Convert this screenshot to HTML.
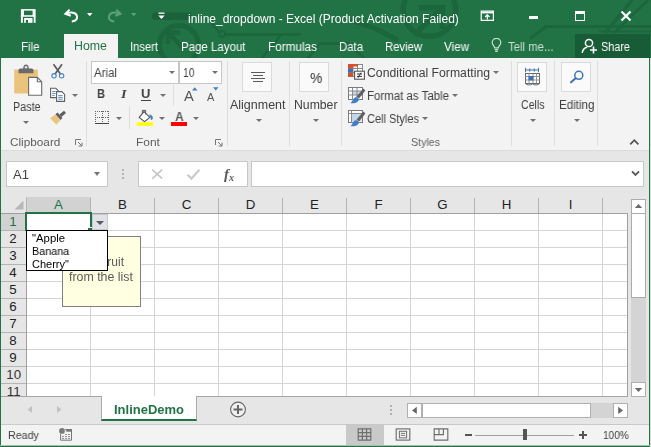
<!DOCTYPE html>
<html lang="en"><head><meta charset="utf-8"><title>inline_dropdown - Excel</title>
<style>
html,body{margin:0;padding:0}
body{width:651px;height:447px;position:relative;overflow:hidden;background:#e6e6e6;font-family:'Liberation Sans',sans-serif}
div,span,svg{position:absolute;box-sizing:border-box}
.t{will-change:transform;white-space:pre;line-height:16px;height:16px;transform-origin:0 50%;display:block}
.sep{width:1px;background:#dedede;top:61px;height:85px}
.box{background:#fff;border:1px solid #c8c8c8}
.ibox{background:#fafafa;border:1px solid #dadada}
.ch{top:197px;height:15px;margin-left:0.5px;font-size:13.3px;line-height:16px;text-align:center;color:#333;width:64px}
.rh{left:1px;width:24px;height:17px;font-size:13.3px;line-height:16px;text-align:center;color:#333}
.arr{width:0;height:0;border-left:3px solid transparent;border-right:3px solid transparent;border-top:3px solid #707070}

</style></head>
<body>
<!-- title bar + tabs -->
<div style="left:0;top:0;width:651px;height:58px;background:#217346"></div>
<div style="left:64px;top:34px;width:54px;height:24px;background:#f3f3f3"></div>
<div style="left:575px;top:34px;width:74.5px;height:23.5px;background:#185c37"></div>
<!-- ribbon -->
<div style="left:1px;top:58px;width:649px;height:93px;background:#f3f3f3;border-bottom:1px solid #dcdcdc"></div>
<div class="sep" style="left:86px"></div>
<div class="sep" style="left:227px"></div>
<div class="sep" style="left:289px"></div>
<div class="sep" style="left:341px"></div>
<div class="sep" style="left:511px"></div>
<div class="sep" style="left:554px"></div>
<div class="sep" style="left:597px"></div>
<div class="sep" style="left:129px;top:106px;height:23px"></div>
<div class="sep" style="left:173px;top:85px;height:21px"></div>
<!-- font boxes -->
<div class="box" style="left:91px;top:61px;width:87.5px;height:23px;border-color:#c6c6c6"></div>
<div class="box" style="left:179.2px;top:61px;width:43px;height:23px;border-color:#c6c6c6"></div>
<div class="arr" style="left:168.5px;top:71px"></div>
<div class="arr" style="left:211.5px;top:71px"></div>
<!-- large icon boxes -->
<div class="ibox" style="left:242px;top:62px;width:30px;height:30px"></div>
<div class="ibox" style="left:299px;top:62px;width:30px;height:30px"></div>
<div class="ibox" style="left:517px;top:62px;width:30px;height:30px"></div>
<div class="ibox" style="left:561px;top:62px;width:30px;height:30px"></div>
<!-- formula bar -->
<div class="box" style="left:6px;top:161px;width:102px;height:26px"></div>
<div class="box" style="left:138px;top:161px;width:110px;height:26px"></div>
<div class="box" style="left:251px;top:161px;width:393px;height:26px"></div>
<div class="arr" style="left:93.5px;top:171.5px;border-left-width:3.8px;border-right-width:3.8px;border-top-width:4px;border-top-color:#777"></div>
<!-- sheet -->
<div style="left:1px;top:197px;width:626px;height:16px;background:#e6e6e6"></div>
<div style="left:26px;top:213px;width:602px;height:184px;background:#fff;border-right:1px solid #a0a0a0;border-bottom:1px solid #a0a0a0;
background-image:linear-gradient(to right,#d4d4d4 1px,transparent 1px),linear-gradient(to bottom,#d4d4d4 1px,transparent 1px);background-size:64px 17px,64px 17px;background-position:0 0,0 0"></div>
<div style="left:1px;top:213px;width:25px;height:183px;background:#e6e6e6"></div>
<!-- column headers -->
<div style="left:1px;top:213px;width:627px;height:1px;background:#9f9f9f"></div>
<div style="left:26px;top:197px;width:65px;height:16px;background:#d2d2d2"></div>
<div class="ch" style="left:26px;color:#217346">A</div>
<div class="ch" style="left:90px;color:#222">B</div>
<div class="ch" style="left:154px;color:#222">C</div>
<div class="ch" style="left:218px;color:#222">D</div>
<div class="ch" style="left:282px;color:#222">E</div>
<div class="ch" style="left:346px;color:#222">F</div>
<div class="ch" style="left:410px;color:#222">G</div>
<div class="ch" style="left:474px;color:#222">H</div>
<div class="ch" style="left:538px;color:#222">I</div>
<div style="left:26px;top:198px;width:1px;height:15px;background:#b4b4b4"></div>
<div style="left:90px;top:198px;width:1px;height:15px;background:#b4b4b4"></div>
<div style="left:154px;top:198px;width:1px;height:15px;background:#b4b4b4"></div>
<div style="left:218px;top:198px;width:1px;height:15px;background:#b4b4b4"></div>
<div style="left:282px;top:198px;width:1px;height:15px;background:#b4b4b4"></div>
<div style="left:346px;top:198px;width:1px;height:15px;background:#b4b4b4"></div>
<div style="left:410px;top:198px;width:1px;height:15px;background:#b4b4b4"></div>
<div style="left:474px;top:198px;width:1px;height:15px;background:#b4b4b4"></div>
<div style="left:538px;top:198px;width:1px;height:15px;background:#b4b4b4"></div>
<div style="left:602px;top:198px;width:1px;height:15px;background:#b4b4b4"></div>
<!-- row headers -->
<div style="left:1px;top:214px;width:25px;height:16px;background:#d2d2d2"></div>
<div class="rh" style="top:214px;color:#217346">1</div>
<div style="left:1px;top:230px;width:25px;height:1px;background:#b4b4b4"></div>
<div class="rh" style="top:231px;color:#222">2</div>
<div style="left:1px;top:247px;width:25px;height:1px;background:#b4b4b4"></div>
<div class="rh" style="top:248px;color:#222">3</div>
<div style="left:1px;top:264px;width:25px;height:1px;background:#b4b4b4"></div>
<div class="rh" style="top:265px;color:#222">4</div>
<div style="left:1px;top:281px;width:25px;height:1px;background:#b4b4b4"></div>
<div class="rh" style="top:282px;color:#222">5</div>
<div style="left:1px;top:298px;width:25px;height:1px;background:#b4b4b4"></div>
<div class="rh" style="top:299px;color:#222">6</div>
<div style="left:1px;top:315px;width:25px;height:1px;background:#b4b4b4"></div>
<div class="rh" style="top:316px;color:#222">7</div>
<div style="left:1px;top:332px;width:25px;height:1px;background:#b4b4b4"></div>
<div class="rh" style="top:333px;color:#222">8</div>
<div style="left:1px;top:349px;width:25px;height:1px;background:#b4b4b4"></div>
<div class="rh" style="top:350px;color:#222">9</div>
<div style="left:1px;top:366px;width:25px;height:1px;background:#b4b4b4"></div>
<div class="rh" style="top:367px;color:#222letter-spacing:-0.8px;padding-left:1.5px">10</div>
<div style="left:1px;top:383px;width:25px;height:1px;background:#b4b4b4"></div>
<div class="rh" style="top:384px;color:#222letter-spacing:-0.8px;padding-left:1.5px">11</div>
<div style="left:26px;top:213px;width:1px;height:184px;background:#9f9f9f"></div>
<!-- select-all triangle -->
<svg style="left:14px;top:200px" width="10" height="10" viewBox="0 0 10 10"><path d="M9.5 0.5V9.5H0.5Z" fill="#b7b7b7"/></svg>
<!-- mask below sheet / clip row 11 -->
<div style="left:1px;top:396px;width:649px;height:28px;background:#e6e6e6"></div><div style="left:1px;top:396px;width:627px;height:1px;background:#a6a6a6"></div>
<!-- tooltip -->
<div style="left:62px;top:236px;width:79px;height:71px;background:#ffffe1;border:1px solid #808080"></div>
<span class="t" style="left:68.4px;top:254px;font-size:12px;color:#5a5a5a;transform:scaleX(1.0)">Pick a fruit</span>
<span class="t" style="left:69px;top:269px;font-size:12px;color:#5a5a5a;transform:scaleX(1.03)">from the list</span>
<!-- selection -->
<div style="left:25px;top:212px;width:67px;height:19px;border:2px solid #217346"></div>
<div style="left:27px;top:229px;width:61px;height:2px;background:#fff"></div>
<div style="left:87px;top:227px;width:5px;height:4px;background:#217346;border-left:1px solid #fff;border-top:1px solid #fff"></div>
<!-- dropdown button -->
<div style="left:92px;top:214px;width:16px;height:16px;background:#e1e1e8;border:1px solid #c8c8d0"></div>
<div class="arr" style="left:95.5px;top:221px;border-left-width:4px;border-right-width:4px;border-top-width:4px;border-top-color:#5a5a5a"></div>
<!-- dropdown list -->
<div style="left:26px;top:230px;width:82px;height:41px;background:#fff;border:1px solid #000"></div>
<span class="t" style="left:31.5px;top:230px;font-size:11px;color:#000;transform:scaleX(1.03)">"Apple</span>
<span class="t" style="left:31.5px;top:243px;font-size:11px;color:#000;transform:scaleX(0.98)">Banana</span>
<span class="t" style="left:31.5px;top:256px;font-size:11px;color:#000;transform:scaleX(0.995)">Cherry"</span>
<!-- vertical scrollbar -->
<div style="left:631px;top:199px;width:15px;height:198px;background:#d4d4d4"></div>
<div class="box" style="left:631px;top:199px;width:15px;height:15px;border-color:#ababab"></div>
<div class="box" style="left:631px;top:382px;width:15px;height:15px;border-color:#b0b0b0"></div>
<div class="box" style="left:631px;top:213px;width:15px;height:85px;border-color:#ababab"></div>
<!-- sheet tabs -->
<div style="left:101px;top:396px;width:96px;height:25px;background:#fff;border-bottom:2px solid #217346;border-right:1px solid #ababab;border-left:1px solid #ababab"></div>
<!-- horizontal scrollbar -->
<div style="left:407px;top:403px;width:220px;height:15px;background:#d4d4d4"></div>
<div class="box" style="left:407px;top:403px;width:15px;height:15px;border-color:#b0b0b0"></div>
<div class="box" style="left:422px;top:403px;width:169px;height:15px;border-color:#b0b0b0"></div>
<div class="box" style="left:613px;top:403px;width:15px;height:15px;border-color:#b0b0b0"></div>
<!-- status bar -->
<div style="left:1px;top:424px;width:649px;height:22px;background:#f3f3f3;border-top:1px solid #c8c8c8"></div>
<div style="left:346px;top:425px;width:38px;height:21px;background:#c9c9c9"></div>
<!-- window border -->
<div style="left:0;top:58px;width:1px;height:389px;background:#217346"></div>
<div style="left:649px;top:58px;width:1px;height:389px;background:#217346"></div><div style="left:650px;top:58px;width:1px;height:389px;background:#d9dfdb"></div>
<div style="left:0;top:445px;width:650px;height:1px;background:#9fc1ae"></div><div style="left:0;top:446px;width:650px;height:1px;background:#217346"></div>
<!-- title bar background pattern (subtle) -->
<svg style="left:0;top:0" width="651" height="58" viewBox="0 0 651 58" fill="none" stroke="#1c663d" stroke-linecap="round">
<path d="M155.5 16.2H188" stroke-width="7.5" stroke="#1b613a"/>
<circle cx="179" cy="45" r="19.5" stroke-width="5"/>
<path d="M168 44V32.5H180M169 33.500000000000004L183 48" stroke-width="4.5" stroke-linecap="butt"/>
<circle cx="222" cy="34" r="3" stroke-width="1.8"/>
<path d="M225.5 34.5H300" stroke-width="2.6"/>
<path d="M219.5 32L212 24" stroke-width="2"/>
<path d="M280 36L262 58" stroke-width="2.4"/>
<path d="M308 58L320 43.5H348L364 58" stroke-width="2.4"/>
<path d="M350 20L374 28L396 39" stroke-width="5"/>
<circle cx="429.5" cy="10" r="26.3" stroke-width="5.4"/>
<path d="M419 7.5H442.5V29M414 35L441 9" stroke-width="5.5" stroke-linecap="butt"/>
<path d="M531 38L546 26.5H651" stroke-width="3"/>
<path d="M600 31.5H651" stroke-width="2"/>
<path d="M606 32L632 0M615 32L648 0" stroke-width="3"/>
</svg>
<!-- QAT icons -->
<svg style="left:20px;top:8px" width="17" height="16" viewBox="0 0 17 16"><rect x="0.9" y="1.1" width="14.7" height="13.7" fill="#fff"/><rect x="4" y="2.6" width="8.6" height="4.6" fill="#217346"/><path d="M2.9 8.700000000000001H13.700000000000001V14.9H12.5V9.9H4.1V14.9H2.9Z" fill="#217346"/><rect x="5.8" y="12" width="2.2" height="2.9" fill="#217346"/></svg>
<svg style="left:63px;top:8px" width="17" height="16" viewBox="0 0 17 16" fill="none" stroke="#fff" stroke-width="2"><path d="M6.6 1.6L2.4 5.8L7.8 7.8"/><path d="M3 5.7C7.4 3.8 13.4 4.2 14.1 8.700000000000001C14.5 11.700000000000001 11.8 13.3 8.8 13.4"/></svg>
<svg style="left:87px;top:13px" width="6" height="4" viewBox="0 0 6 4"><path d="M0 0H5.5L2.75 3.2Z" fill="#fff"/></svg>
<svg style="left:106px;top:8px" width="17" height="16" viewBox="0 0 17 16" fill="none" stroke="#5ca07c" stroke-width="2"><path d="M10.4 1.6L14.6 5.8L9.2 7.8"/><path d="M14 5.7C9.6 3.8 3.6 4.2 2.9 8.700000000000001C2.5 11.700000000000001 5.2 13.3 8.2 13.4"/></svg>
<svg style="left:131px;top:13px" width="6" height="4" viewBox="0 0 6 4"><path d="M0 0H5.5L2.75 3.2Z" fill="#5da27e"/></svg>
<svg style="left:158px;top:12px" width="7" height="8" viewBox="0 0 7 8"><path d="M0.5 0.5H6.5V1.8H0.5Z" fill="#fff"/><path d="M0.3 3.4H6.7L3.5 7Z" fill="#fff"/></svg>
<!-- window controls -->
<svg style="left:480px;top:10px" width="16" height="12" viewBox="0 0 16 12" fill="none" stroke="#fff"><path d="M1.2 1.2H13.4V10.4H1.2Z" stroke-width="1.2"/><path d="M1.2 2.6H13.4" stroke-width="1.6"/><path d="M7.3 9.4V5.2M5.1 7L7.3 4.8L9.5 7" stroke-width="1.2"/></svg>
<div style="left:529px;top:16px;width:9px;height:3px;background:#fff"></div>
<div style="left:575px;top:11px;width:10px;height:10px;border:1px solid #fff;border-top-width:3px"></div>
<svg style="left:620px;top:10px" width="12" height="12" viewBox="0 0 12 12"><path d="M1.5 1.5L10.5 10.5M10.5 1.5L1.5 10.5" stroke="#fff" stroke-width="2.2"/></svg>
<!-- tell me bulb -->
<svg style="left:491px;top:38px" width="11" height="15" viewBox="0 0 11 15" fill="none" stroke="#c6e0d1" stroke-width="1.2"><path d="M3.6 9.8C3.5 8 1.2 7.2 1.2 4.6A4.2 4.2 0 0 1 9.8 4.6C9.8 7.2 7.5 8 7.4 9.8Z"/><path d="M3.8 11.6H7.2M4.2 13.3H6.8"/></svg>
<!-- share icon -->
<svg style="left:581px;top:38px" width="17" height="16" viewBox="0 0 17 16" fill="none" stroke="#fff" stroke-width="1.5"><circle cx="8" cy="5" r="3.6"/><path d="M1.2 15C1.6 11.5 4 9.6 6.2 9.2"/><path d="M12.5 8.5V15.5M9 12H16" stroke-width="1.6"/></svg>
<!-- clipboard group icons -->
<svg style="left:13px;top:63px" width="31" height="34" viewBox="0 0 31 34">
<path d="M1.2 6.5H24.8V30.5H1.2Z" fill="#eac47c"/>
<path d="M5.5 10.2V7.5C5.5 6.4 6.3 5.6 7.4 5.6H10.2C10.2 3 11.5 1.6 13 1.6S15.800000000000001 3 15.800000000000001 5.6H18.6C19.7 5.6 20.5 6.4 20.5 7.500000000000001V10.2Z" fill="#6a6a6a"/>
<rect x="11.8" y="3.3" width="2.4" height="2" fill="#f3f3f3"/>
<path d="M15.6 14.4H24.3L28.7 18.8V32.2H15.6Z" fill="#fff" stroke="#6a6a6a" stroke-width="1.1"/>
<path d="M24.3 14.4V18.8H28.7" fill="none" stroke="#6a6a6a" stroke-width="1.1"/>
</svg>
<svg style="left:50px;top:63px" width="17" height="17" viewBox="0 0 17 17" fill="none">
<path d="M3.5 1.3L10.6 11.2M12 1.3L4.9 11.2" stroke="#5c5c5c" stroke-width="1.7"/>
<circle cx="4" cy="12.8" r="2.2" stroke="#4a86c8" stroke-width="1.1"/>
<circle cx="11.6" cy="12.8" r="2.2" stroke="#4a86c8" stroke-width="1.1"/>
</svg>
<svg style="left:49px;top:87px" width="18" height="16" viewBox="0 0 18 16" fill="#fff" stroke="#606060" stroke-width="1.1">
<path d="M1.6 1.3H6.8L9.2 3.7V10.6H1.6Z"/>
<path d="M3.2 4.6H6.6M3.2 6.6H6.6M3.2 8.6H5.6" stroke="#3f7fc4" stroke-width="0.9"/>
<path d="M7.6 4.6H12.8L15.6 7.4V14.4H7.6Z"/>
<path d="M9.3 8.6H13.6M9.3 10.4H13.6M9.3 12.2H13.6" stroke="#3f7fc4" stroke-width="0.9"/>
</svg>
<div class="arr" style="left:71.5px;top:94px;border-left-width:3px;border-right-width:3px"></div>
<svg style="left:49px;top:110px" width="18" height="16" viewBox="0 0 18 16">
<path d="M1 8.2L6.2 4.4L11.4 10.2L7.4 14.6Z" fill="#eac47c"/>
<path d="M6.4 4.2L8.6 2.6L13.4 8L11.6 10Z" fill="#5f5f5f"/>
<path d="M10.4 4.6L15 0.8L17 3L12.4 7Z" fill="#5f5f5f"/>
</svg>
<div class="arr" style="left:22.5px;top:121px;border-left-width:3px;border-right-width:3px"></div>
<!-- font group icons -->
<span class="t" style="left:97px;top:86px;font-size:13px;font-weight:bold;color:#444;transform:scaleX(0.85)">B</span>
<span class="t" style="left:121px;top:86px;font-size:13px;font-weight:bold;font-style:italic;color:#444;font-family:'Liberation Serif',serif;transform:scaleX(1.1)">I</span>
<span class="t" style="left:141px;top:86px;font-size:13px;font-weight:bold;color:#444;transform:scaleX(0.95)">U</span>
<div style="left:141px;top:100px;width:10px;height:1px;background:#444"></div>
<div class="arr" style="left:159.5px;top:94px;border-left-width:3px;border-right-width:3px"></div>
<span class="t" style="left:184px;top:88px;font-size:14px;color:#555;transform:scaleX(1.05)">A</span>
<svg style="left:192px;top:87px" width="6" height="4" viewBox="0 0 6 4"><path d="M0 3.5H5.5L2.75 0.3Z" fill="#3f7fc4"/></svg>
<span class="t" style="left:207px;top:89px;font-size:11px;color:#555;transform:scaleX(1.0)">A</span>
<svg style="left:213px;top:87px" width="6" height="4" viewBox="0 0 6 4"><path d="M0 0.3H5.5L2.75 3.5Z" fill="#3f7fc4"/></svg>
<svg style="left:94px;top:110px" width="16" height="15" viewBox="0 0 16 15" fill="none" stroke="#666" stroke-width="1" shape-rendering="crispEdges">
<path d="M1 1.5H15M1 7.5H15M1.5 1V13M8.5 1V13M14.5 1V13" stroke-dasharray="1 1"/>
<path d="M1 13.5H15" stroke="#444" stroke-width="1"/></svg>
<div class="arr" style="left:115.5px;top:117px;border-left-width:3px;border-right-width:3px"></div>
<svg style="left:136px;top:109px" width="19" height="18" viewBox="0 0 19 18">
<path d="M0.8 13.3H17.1V16.8H0.8Z" fill="#ffff00"/>
<path d="M8 2.6L13.8 8.4L8.5 12.6L3.2 8.4Z" fill="#fff" stroke="#555" stroke-width="1.1"/>
<path d="M6.4 4.6V1.4H9.6V5.4" fill="none" stroke="#555" stroke-width="1"/>
<path d="M13.2 5.4C15.6 5.4 17 7.2 16.8 9.2C16.6 10.6 15.6 11.2 14.6 10.8C15.2 9.4 14.8 8.6 14 8Z" fill="#3f7fc4"/>
</svg>
<div class="arr" style="left:158.5px;top:117px;border-left-width:3px;border-right-width:3px"></div>
<span class="t" style="left:174.8px;top:109.2px;font-size:13.5px;font-weight:bold;color:#5a5a5a;transform:scaleX(0.9)">A</span>
<div style="left:171px;top:122px;width:16px;height:4px;background:#ff0000"></div>
<div class="arr" style="left:192.5px;top:117px;border-left-width:3px;border-right-width:3px"></div>
<!-- dialog launchers -->
<svg style="left:75px;top:139px" width="8" height="8" viewBox="0 0 8 8" fill="none" stroke="#777" stroke-width="1"><path d="M0.5 6V0.5H6"/><path d="M3 3L7 7M7 3.6V7H3.6"/></svg>
<svg style="left:215px;top:139px" width="8" height="8" viewBox="0 0 8 8" fill="none" stroke="#777" stroke-width="1"><path d="M0.5 6V0.5H6"/><path d="M3 3L7 7M7 3.6V7H3.6"/></svg>
<!-- alignment / number -->
<div style="left:251px;top:72px;width:14px;height:1px;background:#5a5a5a"></div>
<div style="left:253px;top:75px;width:10px;height:1px;background:#5a5a5a"></div>
<div style="left:251px;top:78px;width:14px;height:1px;background:#5a5a5a"></div>
<div style="left:253px;top:81px;width:10px;height:1px;background:#5a5a5a"></div>
<div class="arr" style="left:255.5px;top:119px;border-left-width:3px;border-right-width:3px"></div>
<span class="t" style="left:309.5px;top:69.5px;font-size:15px;color:#333;transform:scaleX(0.93)">%</span>
<div class="arr" style="left:312.5px;top:119px;border-left-width:3px;border-right-width:3px"></div>
<!-- styles icons -->
<svg style="left:347px;top:63px" width="19" height="18" viewBox="0 0 19 18">
<rect x="1.5" y="1.5" width="14" height="12" fill="#fff" stroke="#8a8a8a" stroke-width="1"/>
<path d="M6 1.5V13.5M10.5 1.5V13.5M1.5 5.5H15.5M1.5 9.5H15.5" stroke="#8a8a8a" stroke-width="1" fill="none"/>
<rect x="1" y="1" width="5" height="4.5" fill="#d4502f"/><rect x="6" y="1" width="5" height="2.5" fill="#d4502f"/>
<rect x="1" y="5.700000000000001" width="5" height="3.8" fill="#3f6fb5"/>
<rect x="1" y="9.8" width="5" height="4" fill="#d4502f"/>
<rect x="7.6" y="8.2" width="9.8" height="8" fill="#fff" stroke="#555" stroke-width="1.1"/>
<path d="M10 11H15M10 13.4H15M14 9.6L11 14.8" stroke="#333" stroke-width="1" fill="none"/>
</svg>
<svg style="left:347px;top:86px" width="19" height="18" viewBox="0 0 19 18">
<rect x="1.5" y="1.5" width="14" height="12" fill="#fff" stroke="#7a7a7a" stroke-width="1"/>
<rect x="5.5" y="5" width="9" height="4" fill="#c5d5ea"/>
<path d="M5.5 1.5V13.5M10 1.5V13.5M1.5 5H15.5M1.5 9H15.5" stroke="#8a8a8a" stroke-width="1" fill="none"/>
<path d="M9.6 10.6L16.4 2.6L18.4 4.4L12 12.6Z" fill="#5f5f5f"/>
<path d="M3.4 17.2C5.4 16.2 5.6 13 7.8 11.6C9.8 10.4 12.4 12.2 11.6 14.4C10.6 17 6 17.6 3.4 17.2Z" fill="#3f7fc4"/>
</svg>
<svg style="left:347px;top:109px" width="19" height="18" viewBox="0 0 19 18">
<rect x="1.5" y="1.5" width="14" height="12" fill="#fff" stroke="#7a7a7a" stroke-width="1"/>
<rect x="4.5" y="4.5" width="10" height="8" fill="#c5d5ea"/>
<path d="M4.5 1.5V13.5M1.5 4.5H15.5" stroke="#8a8a8a" stroke-width="1" fill="none"/>
<path d="M9.6 10.6L16.4 2.6L18.4 4.4L12 12.6Z" fill="#5f5f5f"/>
<path d="M3.4 17.2C5.4 16.2 5.6 13 7.8 11.6C9.8 10.4 12.4 12.2 11.6 14.4C10.6 17 6 17.6 3.4 17.2Z" fill="#3f7fc4"/>
</svg>
<div class="arr" style="left:492.5px;top:71px;border-left-width:3px;border-right-width:3px"></div>
<div class="arr" style="left:451.5px;top:94px;border-left-width:3px;border-right-width:3px"></div>
<div class="arr" style="left:422px;top:117px;border-left-width:3px;border-right-width:3px"></div>
<!-- cells / editing icons -->
<svg style="left:524px;top:67px" width="17" height="19" viewBox="0 0 17 19" fill="none">
<path d="M1.5 3H14.5M1.5 0.8V5.2M14.5 0.8V5.2M5.8 1.4V4.6M10.2 1.4V4.6" stroke="#3f6fb5" stroke-width="1"/>
<rect x="1.5" y="6.5" width="14" height="10" fill="#fff" stroke="#6a6a6a" stroke-width="1"/>
<path d="M1.5 9.5H15.5M1.5 13H15.5M5 6.5V16.5M9 6.5V16.5M12.5 6.5V16.5" stroke="#8a8a8a" stroke-width="0.9"/>
<rect x="4.5" y="9" width="5" height="4.4" fill="#3f6fb5"/>
<path d="M1.2 16.4C3 18.4 6.6 18.4 8.4 16.8C10.2 18.4 13.8 18.4 15.6 16.4" stroke="#6a6a6a" stroke-width="1"/>
</svg>
<svg style="left:568px;top:68px" width="18" height="17" viewBox="0 0 18 17" fill="none" stroke="#3f74b8"><circle cx="10.8" cy="7.3" r="4" stroke-width="1.5"/><path d="M7.6 10.2L3 14.2" stroke-width="2.1" stroke-linecap="round"/></svg>
<div class="arr" style="left:529.5px;top:119px;border-left-width:3px;border-right-width:3px"></div>
<div class="arr" style="left:573.5px;top:119px;border-left-width:3px;border-right-width:3px"></div>
<!-- collapse ribbon chevron -->
<svg style="left:629px;top:138px" width="11" height="8" viewBox="0 0 11 8" fill="none" stroke="#555" stroke-width="1.8"><path d="M1.2 6.4L5.3 2.2L9.4 6.4"/></svg>
<!-- formula bar icons -->
<div style="left:122px;top:169px;width:2px;height:2px;background:#b5b5b5"></div>
<div style="left:122px;top:173px;width:2px;height:2px;background:#b5b5b5"></div>
<div style="left:122px;top:177px;width:2px;height:2px;background:#b5b5b5"></div>
<svg style="left:151px;top:168px" width="13" height="12" viewBox="0 0 13 12"><path d="M1.2 1.6L11.2 10.6M11.2 1.6L1.2 10.6" stroke="#c3c3c3" stroke-width="1.5" fill="none"/></svg>
<svg style="left:186px;top:168px" width="15" height="13" viewBox="0 0 15 13"><path d="M1.6 6.8L5.4 10.6L13.4 1.8" stroke="#cacaca" stroke-width="2.2" fill="none"/></svg>
<span class="t" style="left:224px;top:166px;font-size:15px;font-style:italic;font-weight:bold;color:#5a5a5a;font-family:'Liberation Serif',serif">f</span>
<span class="t" style="left:229px;top:169.5px;font-size:10px;font-style:italic;font-weight:bold;color:#5a5a5a;font-family:'Liberation Serif',serif">x</span>
<svg style="left:631px;top:170px" width="9" height="7" viewBox="0 0 9 7" fill="none" stroke="#555" stroke-width="1.8"><path d="M1 1.4L4.5 5L8 1.4"/></svg>
<!-- sheet nav -->
<svg style="left:27px;top:405px" width="6" height="9" viewBox="0 0 6 9"><path d="M5 0.8V8L0.6 4.4Z" fill="#c2c2c2"/></svg>
<svg style="left:56px;top:405px" width="6" height="9" viewBox="0 0 6 9"><path d="M1 0.8V8L5.4 4.4Z" fill="#c2c2c2"/></svg>
<svg style="left:229px;top:400px" width="18" height="18" viewBox="0 0 18 18" fill="none" stroke="#666"><circle cx="9" cy="9.5" r="7.4" stroke-width="1.1" fill="#f0f0f0"/><path d="M9 5V14M4.5 9.5H13.5" stroke-width="2"/></svg>
<div style="left:390px;top:405px;width:2px;height:2px;background:#b0b0b0"></div>
<div style="left:390px;top:409px;width:2px;height:2px;background:#b0b0b0"></div>
<div style="left:390px;top:413px;width:2px;height:2px;background:#b0b0b0"></div>
<!-- scrollbar arrows -->
<svg style="left:411px;top:406px" width="7" height="9" viewBox="0 0 7 9"><path d="M5.8 0.8V8L1 4.4Z" fill="#666"/></svg>
<svg style="left:617px;top:406px" width="7" height="9" viewBox="0 0 7 9"><path d="M1.2 0.8V8L6 4.4Z" fill="#666"/></svg>
<svg style="left:634px;top:203px" width="9" height="6" viewBox="0 0 9 6"><path d="M0.8 5H8.2L4.5 1Z" fill="#6a6a6a"/></svg>
<svg style="left:634px;top:387px" width="9" height="6" viewBox="0 0 9 6"><path d="M0.8 1H8.2L4.5 5Z" fill="#6a6a6a"/></svg>
<!-- status bar icons -->
<svg style="left:58px;top:427px" width="15" height="15" viewBox="0 0 15 15">
<path d="M2.6 7V13.2H13.5V2.6H7" fill="none" stroke="#767676" stroke-width="1"/>
<rect x="8.2" y="2.1" width="5.8" height="2.6" fill="#767676"/>
<circle cx="4" cy="3.9" r="2.9" fill="#7a7a7a"/>
<path d="M7.1 7.5H8.9M10.1 7.5H11.9M4.1 9.6H5.9M7.1 9.6H8.9M10.1 9.6H11.9M4.1 11.6H5.9M7.1 11.6H8.9M10.1 11.6H11.9" stroke="#767676" stroke-width="0.9"/>
</svg>
<svg style="left:357px;top:428px" width="15" height="13" viewBox="0 0 15 13" fill="none" stroke="#6e6e6e" stroke-width="1.15"><path d="M1.2 0.9H13.8V12.1H1.2ZM5.4 0.9V12.1M9.6 0.9V12.1M1.2 4.6H13.8M1.2 8.4H13.8"/></svg>
<svg style="left:395px;top:428px" width="16" height="13" viewBox="0 0 16 13" fill="none" stroke="#6e6e6e"><rect x="1.2" y="0.9" width="13.6" height="11.2" stroke-width="1.15"/><rect x="4.4" y="3.3" width="7.2" height="6.6" stroke-width="1"/><path d="M5.8 5.4H10.2M5.8 7.4H10.2" stroke-width="0.9"/></svg>
<svg style="left:433px;top:428px" width="16" height="13" viewBox="0 0 16 13" fill="none" stroke="#6e6e6e" stroke-width="1.15"><path d="M1.2 0.9H14.8V12.1H1.2ZM1.2 6.6H10.4V0.9M6 0.9V6.6"/></svg>
<!-- zoom slider -->
<div style="left:465px;top:434px;width:7px;height:2px;background:#555"></div>
<div style="left:475px;top:434.5px;width:99px;height:1px;background:#a0a0a0"></div>
<div style="left:523px;top:429px;width:4px;height:11px;background:#555"></div>
<div style="left:579px;top:434px;width:8px;height:2px;background:#555"></div>
<div style="left:582px;top:431px;width:2px;height:8px;background:#555"></div>

<!-- text -->
<span class="t" style="left:188px;top:11.3px;font-size:12px;color:#fff;font-weight:normal;transform:scaleX(0.999);">inline_dropdown - Excel (Product Activation Failed)</span>
<span class="t" style="left:21px;top:38.6px;font-size:12px;color:#fff;font-weight:normal;transform:scaleX(0.956);">File</span>
<span class="t" style="left:74px;top:37.6px;font-size:12px;color:#217346;font-weight:normal;transform:scaleX(1.031);">Home</span>
<span class="t" style="left:130px;top:38.6px;font-size:12px;color:#fff;font-weight:normal;transform:scaleX(0.933);">Insert</span>
<span class="t" style="left:181px;top:38.6px;font-size:12px;color:#fff;font-weight:normal;transform:scaleX(0.957);">Page Layout</span>
<span class="t" style="left:268px;top:38.6px;font-size:12px;color:#fff;font-weight:normal;transform:scaleX(0.980);">Formulas</span>
<span class="t" style="left:339px;top:38.6px;font-size:12px;color:#fff;font-weight:normal;transform:scaleX(0.946);">Data</span>
<span class="t" style="left:385px;top:38.6px;font-size:12px;color:#fff;font-weight:normal;transform:scaleX(0.940);">Review</span>
<span class="t" style="left:444px;top:38.6px;font-size:12px;color:#fff;font-weight:normal;transform:scaleX(0.969);">View</span>
<span class="t" style="left:508px;top:38.6px;font-size:12px;color:#c6e0d1;font-weight:normal;transform:scaleX(0.948);">Tell me...</span>
<span class="t" style="left:601px;top:38.6px;font-size:12px;color:#fff;font-weight:normal;transform:scaleX(0.905);">Share</span>
<span class="t" style="left:12.5px;top:99.0px;font-size:12px;color:#404040;font-weight:normal;transform:scaleX(0.896);">Paste</span>
<span class="t" style="left:10.3px;top:134.1px;font-size:11px;color:#5e5e5e;font-weight:normal;transform:scaleX(1.070);">Clipboard</span>
<span class="t" style="left:94px;top:65.0px;font-size:12px;color:#404040;font-weight:normal;transform:scaleX(0.958);">Arial</span>
<span class="t" style="left:182.5px;top:65.0px;font-size:12px;color:#404040;font-weight:normal;transform:scaleX(0.861);">10</span>
<span class="t" style="left:135.8px;top:134.1px;font-size:11px;color:#5e5e5e;font-weight:normal;transform:scaleX(1.086);">Font</span>
<span class="t" style="left:230px;top:97.0px;font-size:12px;color:#404040;font-weight:normal;transform:scaleX(1.040);">Alignment</span>
<span class="t" style="left:293.5px;top:97.0px;font-size:12px;color:#404040;font-weight:normal;transform:scaleX(1.019);">Number</span>
<span class="t" style="left:367px;top:64.5px;font-size:12px;color:#404040;font-weight:normal;transform:scaleX(1.019);">Conditional Formatting</span>
<span class="t" style="left:367px;top:87.5px;font-size:12px;color:#404040;font-weight:normal;transform:scaleX(0.955);">Format as Table</span>
<span class="t" style="left:367px;top:110.5px;font-size:12px;color:#404040;font-weight:normal;transform:scaleX(0.917);">Cell Styles</span>
<span class="t" style="left:411px;top:134.1px;font-size:11px;color:#5e5e5e;font-weight:normal;transform:scaleX(0.968);">Styles</span>
<span class="t" style="left:520.5px;top:97.0px;font-size:12px;color:#404040;font-weight:normal;transform:scaleX(0.881);">Cells</span>
<span class="t" style="left:558.5px;top:97.0px;font-size:12px;color:#404040;font-weight:normal;transform:scaleX(0.967);">Editing</span>
<span class="t" style="left:13.2px;top:166.5px;font-size:13px;color:#444;font-weight:normal;transform:scaleX(0.993);">A1</span>
<span class="t" style="left:114px;top:401.7px;font-size:12px;color:#217346;font-weight:bold;transform:scaleX(1.082);">InlineDemo</span>
<span class="t" style="left:8.1px;top:427.1px;font-size:11px;color:#3c3c3c;font-weight:normal;transform:scaleX(0.972);">Ready</span>
<span class="t" style="left:602.6px;top:427.1px;font-size:11px;color:#3c3c3c;font-weight:normal;transform:scaleX(0.917);">100%</span>
</body></html>
